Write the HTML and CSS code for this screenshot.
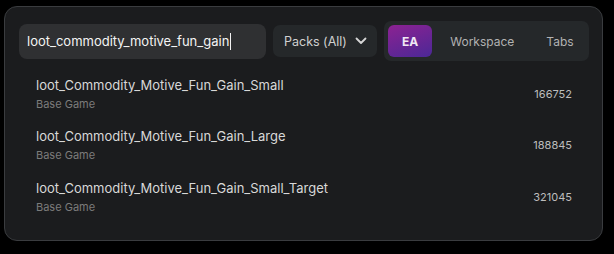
FILE: index.html
```html
<!DOCTYPE html>
<html lang="en">
<head>
  <meta charset="UTF-8">
  <meta name="viewport" content="width=device-width, initial-scale=1.0">
  <title>Loot Search</title>
  <link rel="stylesheet" href="styles.css">
</head>
<body>
  <div class="panel">
    <div class="toolbar">
      <div class="search">loot_commodity_motive_fun_gain<span class="caret"></span></div>

      <div class="select">
        <span>Packs (All)</span>
        <svg width="12" height="8" viewBox="0 0 12 8">
          <path d="M1.5 1.5 L6 6 L10.5 1.5" fill="none" stroke="#d6d6d6" stroke-width="1.8" stroke-linecap="round" stroke-linejoin="round"/>
        </svg>
      </div>

      <div class="tabs">
        <button class="tab active">EA</button>
        <button class="tab">Workspace</button>
        <button class="tab">Tabs</button>
      </div>
    </div>

    <div class="results">
      <div class="row">
        <div class="info">
          <div class="name">loot_Commodity_Motive_Fun_Gain_Small</div>
          <div class="pack">Base Game</div>
        </div>
        <div class="id">166752</div>
      </div>
      <div class="row">
        <div class="info">
          <div class="name">loot_Commodity_Motive_Fun_Gain_Large</div>
          <div class="pack">Base Game</div>
        </div>
        <div class="id">188845</div>
      </div>
      <div class="row">
        <div class="info">
          <div class="name">loot_Commodity_Motive_Fun_Gain_Small_Target</div>
          <div class="pack">Base Game</div>
        </div>
        <div class="id">321045</div>
      </div>
    </div>
  </div>
</body>
</html>
```

FILE: styles.css
```css
body {
  margin: 0;
  background-color: #000000;
  font-family: Inter, "Noto Sans", sans-serif;
}

.panel {
  margin: 6px 0 0 4px;
  width: 599px;
  height: 235px;
  box-sizing: border-box;
  background: #1b1c1e;
  border: 1px solid #3a3c3f;
  border-radius: 13px;
  padding: 14px 13px 14px 14px;
}

.toolbar {
  display: flex;
  align-items: center;
  gap: 7px;
}

.search {
  flex: 1;
  height: 35px;
  box-sizing: border-box;
  padding: 0 8px;
  display: flex;
  align-items: center;
  background: #2f3032;
  border-radius: 8px;
  color: #f4f4f4;
  font-size: 13px;
}

.search .caret {
  width: 1px;
  height: 17px;
  margin-left: 1px;
  background: #f2f2f2;
}

.select {
  width: 104px;
  height: 32px;
  box-sizing: border-box;
  padding: 0 10px 0 11px;
  display: flex;
  align-items: center;
  justify-content: space-between;
  background: #25282a;
  border-radius: 7px;
  color: #d0d0d0;
  font-size: 12.5px;
}

.tabs {
  width: 205px;
  box-sizing: border-box;
  display: flex;
  gap: 4px;
  padding: 4px;
  background: #25282a;
  border-radius: 7px;
}

.tab {
  height: 32px;
  padding: 0 14px;
  border: none;
  border-radius: 6px;
  background: transparent;
  color: #b2b2b2;
  font-family: inherit;
  font-size: 12px;
}

.tab.active {
  background: linear-gradient(160deg, #8c2292, #4b2896);
  color: #f0e8f4;
  font-weight: bold;
}

.results {
  margin-top: 7px;
}

.row {
  height: 51.5px;
  padding: 0 17px;
  display: flex;
  align-items: center;
  justify-content: space-between;
}

.row .name {
  font-size: 13px;
  color: #d8d8d8;
}

.row .pack {
  margin-top: 4px;
  font-size: 11px;
  color: #7b7b7b;
}

.row .id {
  font-size: 11px;
  color: #bdbdbd;
}
```
